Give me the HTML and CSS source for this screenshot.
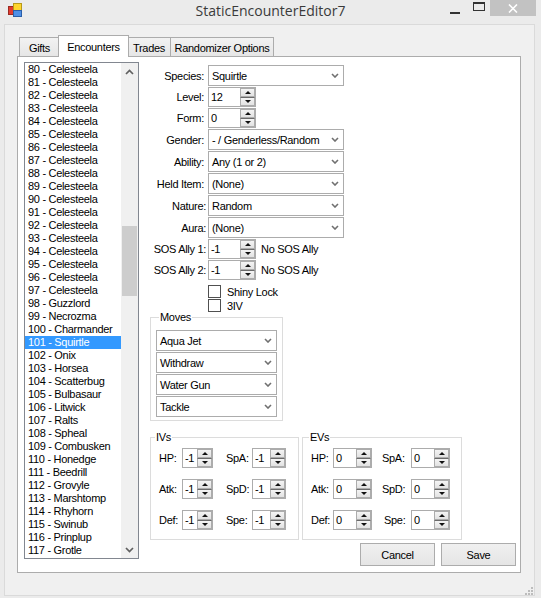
FILE: index.html
```html
<!DOCTYPE html>
<html>
<head>
<meta charset="utf-8">
<title>StaticEncounterEditor7</title>
<link rel="stylesheet" href="styles.css">
</head>
<body>
<div class="window">
  <div class="titlebar">
    <div class="tb-left">
      <svg class="appicon" width="14" height="14" viewBox="0 0 14 14">
        <rect x="0.5" y="3.5" width="5" height="8" fill="#e23b2e" stroke="#9a2a22"/>
        <rect x="5.5" y="0.5" width="8" height="7" fill="#ffd52e" stroke="#b79a1a"/>
        <rect x="5.5" y="7.5" width="8" height="6" fill="#4f8fe6" stroke="#2a5ea8"/>
      </svg>
    </div>
    <div class="title">StaticEncounterEditor7</div>
    <div class="tb-right">
      <span class="wmin"></span>
      <span class="wmax"></span>
      <span class="wclose"><svg width="10" height="9" viewBox="0 0 10 9"><path d="M1 0.5l8 8M9 0.5l-8 8" stroke="#fff" stroke-width="1.6"/></svg></span>
    </div>
  </div>
  <div class="client">
    <div class="tabs">
      <div class="tab t-gifts">Gifts</div>
      <div class="tab sel t-enc">Encounters</div>
      <div class="tab t-trades">Trades</div>
      <div class="tab t-rand">Randomizer Options</div>
    </div>
    <div class="page">
      <div class="listbox">
        <div class="items">
          <div class="item">80 - Celesteela</div>
          <div class="item">81 - Celesteela</div>
          <div class="item">82 - Celesteela</div>
          <div class="item">83 - Celesteela</div>
          <div class="item">84 - Celesteela</div>
          <div class="item">85 - Celesteela</div>
          <div class="item">86 - Celesteela</div>
          <div class="item">87 - Celesteela</div>
          <div class="item">88 - Celesteela</div>
          <div class="item">89 - Celesteela</div>
          <div class="item">90 - Celesteela</div>
          <div class="item">91 - Celesteela</div>
          <div class="item">92 - Celesteela</div>
          <div class="item">93 - Celesteela</div>
          <div class="item">94 - Celesteela</div>
          <div class="item">95 - Celesteela</div>
          <div class="item">96 - Celesteela</div>
          <div class="item">97 - Celesteela</div>
          <div class="item">98 - Guzzlord</div>
          <div class="item">99 - Necrozma</div>
          <div class="item">100 - Charmander</div>
          <div class="item selected">101 - Squirtle</div>
          <div class="item">102 - Onix</div>
          <div class="item">103 - Horsea</div>
          <div class="item">104 - Scatterbug</div>
          <div class="item">105 - Bulbasaur</div>
          <div class="item">106 - Litwick</div>
          <div class="item">107 - Ralts</div>
          <div class="item">108 - Spheal</div>
          <div class="item">109 - Combusken</div>
          <div class="item">110 - Honedge</div>
          <div class="item">111 - Beedrill</div>
          <div class="item">112 - Grovyle</div>
          <div class="item">113 - Marshtomp</div>
          <div class="item">114 - Rhyhorn</div>
          <div class="item">115 - Swinub</div>
          <div class="item">116 - Prinplup</div>
          <div class="item">117 - Grotle</div>
        </div>
        <div class="vscroll">
          <div class="sbtn"><svg width="9" height="6" viewBox="0 0 9 6"><path d="M1 5l3.5-3.5 3.5 3.5" fill="none" stroke="#606060" stroke-width="1.7"/></svg></div>
          <div class="track"><div class="thumb"></div></div>
          <div class="sbtn"><svg width="9" height="6" viewBox="0 0 9 6"><path d="M1 1l3.5 3.5 3.5-3.5" fill="none" stroke="#606060" stroke-width="1.7"/></svg></div>
        </div>
      </div>

      <div class="form">
        <div class="fields">
          <div class="lbl">Species:</div>
          <div class="combo w136"><span>Squirtle</span><svg class="chev" width="8" height="5" viewBox="0 0 8 5"><path d="M1 1l3 3 3-3" fill="none" stroke="#707070" stroke-width="1.6"/></svg></div>

          <div class="lbl">Level:</div>
          <div class="num w48"><span class="val">12</span><span class="spin"><span class="up"></span><span class="dn"></span></span></div>

          <div class="lbl">Form:</div>
          <div class="num w48"><span class="val">0</span><span class="spin"><span class="up"></span><span class="dn"></span></span></div>

          <div class="lbl">Gender:</div>
          <div class="combo w136"><span>- / Genderless/Random</span><svg class="chev" width="8" height="5" viewBox="0 0 8 5"><path d="M1 1l3 3 3-3" fill="none" stroke="#707070" stroke-width="1.6"/></svg></div>

          <div class="lbl">Ability:</div>
          <div class="combo w136"><span>Any (1 or 2)</span><svg class="chev" width="8" height="5" viewBox="0 0 8 5"><path d="M1 1l3 3 3-3" fill="none" stroke="#707070" stroke-width="1.6"/></svg></div>

          <div class="lbl">Held Item:</div>
          <div class="combo w136"><span>(None)</span><svg class="chev" width="8" height="5" viewBox="0 0 8 5"><path d="M1 1l3 3 3-3" fill="none" stroke="#707070" stroke-width="1.6"/></svg></div>

          <div class="lbl nudge">Nature:</div>
          <div class="combo w136"><span>Random</span><svg class="chev" width="8" height="5" viewBox="0 0 8 5"><path d="M1 1l3 3 3-3" fill="none" stroke="#707070" stroke-width="1.6"/></svg></div>

          <div class="lbl nudge">Aura:</div>
          <div class="combo w136"><span>(None)</span><svg class="chev" width="8" height="5" viewBox="0 0 8 5"><path d="M1 1l3 3 3-3" fill="none" stroke="#707070" stroke-width="1.6"/></svg></div>

          <div class="lbl nudge">SOS Ally 1:</div>
          <div class="sos"><div class="num w48"><span class="val">-1</span><span class="spin"><span class="up"></span><span class="dn"></span></span></div><span class="sostext">No SOS Ally</span></div>

          <div class="lbl nudge">SOS Ally 2:</div>
          <div class="sos"><div class="num w48"><span class="val">-1</span><span class="spin"><span class="up"></span><span class="dn"></span></span></div><span class="sostext">No SOS Ally</span></div>
        </div>

        <div class="checks">
          <div class="chk"><span class="box"></span><span>Shiny Lock</span></div>
          <div class="chk"><span class="box"></span><span>3IV</span></div>
        </div>

        <fieldset class="group moves">
          <legend>Moves</legend>
          <div class="movelist">
            <div class="combo w121"><span>Aqua Jet</span><svg class="chev" width="8" height="5" viewBox="0 0 8 5"><path d="M1 1l3 3 3-3" fill="none" stroke="#707070" stroke-width="1.6"/></svg></div>
            <div class="combo w121"><span>Withdraw</span><svg class="chev" width="8" height="5" viewBox="0 0 8 5"><path d="M1 1l3 3 3-3" fill="none" stroke="#707070" stroke-width="1.6"/></svg></div>
            <div class="combo w121"><span>Water Gun</span><svg class="chev" width="8" height="5" viewBox="0 0 8 5"><path d="M1 1l3 3 3-3" fill="none" stroke="#707070" stroke-width="1.6"/></svg></div>
            <div class="combo w121"><span>Tackle</span><svg class="chev" width="8" height="5" viewBox="0 0 8 5"><path d="M1 1l3 3 3-3" fill="none" stroke="#707070" stroke-width="1.6"/></svg></div>
          </div>
        </fieldset>

        <div class="statrow">
          <fieldset class="group ivs">
            <legend>IVs</legend>
            <div class="statgrid ivgrid">
              <div class="slbl">HP:</div>
              <div class="num"><span class="val">-1</span><span class="spin"><span class="up"></span><span class="dn"></span></span></div>
              <div class="slbl r">SpA:</div>
              <div class="num"><span class="val">-1</span><span class="spin"><span class="up"></span><span class="dn"></span></span></div>

              <div class="slbl">Atk:</div>
              <div class="num"><span class="val">-1</span><span class="spin"><span class="up"></span><span class="dn"></span></span></div>
              <div class="slbl r">SpD:</div>
              <div class="num"><span class="val">-1</span><span class="spin"><span class="up"></span><span class="dn"></span></span></div>

              <div class="slbl">Def:</div>
              <div class="num"><span class="val">-1</span><span class="spin"><span class="up"></span><span class="dn"></span></span></div>
              <div class="slbl r spe">Spe:</div>
              <div class="num"><span class="val">-1</span><span class="spin"><span class="up"></span><span class="dn"></span></span></div>
            </div>
          </fieldset>
          <fieldset class="group evs">
            <legend>EVs</legend>
            <div class="statgrid evgrid">
              <div class="slbl">HP:</div>
              <div class="num"><span class="val">0</span><span class="spin"><span class="up"></span><span class="dn"></span></span></div>
              <div class="slbl r">SpA:</div>
              <div class="num"><span class="val">0</span><span class="spin"><span class="up"></span><span class="dn"></span></span></div>

              <div class="slbl">Atk:</div>
              <div class="num"><span class="val">0</span><span class="spin"><span class="up"></span><span class="dn"></span></span></div>
              <div class="slbl r">SpD:</div>
              <div class="num"><span class="val">0</span><span class="spin"><span class="up"></span><span class="dn"></span></span></div>

              <div class="slbl">Def:</div>
              <div class="num"><span class="val">0</span><span class="spin"><span class="up"></span><span class="dn"></span></span></div>
              <div class="slbl r spe">Spe:</div>
              <div class="num"><span class="val">0</span><span class="spin"><span class="up"></span><span class="dn"></span></span></div>
            </div>
          </fieldset>
        </div>

        <div class="buttons">
          <div class="btn">Cancel</div>
          <div class="btn">Save</div>
        </div>
      </div>
    </div>
    <div class="gripline">
      <svg class="grip" width="9" height="9" viewBox="0 0 9 9">
        <rect x="7" y="1" width="2" height="2" fill="#bcbcbc"/>
        <rect x="4" y="4" width="2" height="2" fill="#bcbcbc"/>
        <rect x="7" y="4" width="2" height="2" fill="#bcbcbc"/>
        <rect x="1" y="7" width="2" height="2" fill="#bcbcbc"/>
        <rect x="4" y="7" width="2" height="2" fill="#bcbcbc"/>
        <rect x="7" y="7" width="2" height="2" fill="#bcbcbc"/>
      </svg>
    </div>
  </div>
</div>
</body>
</html>
```
FILE: styles.css
```css
* { box-sizing: border-box; }
html, body { margin: 0; padding: 0; }
body {
  width: 541px;
  height: 598px;
  overflow: hidden;
  background: #ebebeb;
  font-family: "Liberation Sans", Arial, sans-serif;
  font-size: 11px;
  letter-spacing: -0.3px;
  color: #000;
}
.window { width: 541px; height: 598px; background: #ebebeb; }

/* title bar */
.titlebar {
  height: 24px;
  display: grid;
  grid-template-columns: 1fr auto 1fr;
  align-items: start;
}
.tb-left { padding: 3px 0 0 8px; }
.appicon { display: block; }
.title {
  font-family: "Open Sans", "Noto Sans", sans-serif;
  font-size: 14px;
  letter-spacing: 0;
  color: #3a3a3a;
  line-height: 20px;
  padding-top: 1px;
}
.tb-right { display: flex; justify-content: flex-end; align-items: flex-start; padding-right: 5px; }
.wmin { width: 10px; height: 2px; background: #333; margin-top: 12px; }
.wmax { width: 12px; height: 9px; border: 1px solid #333; border-top-width: 2px; margin: 2px 0 0 13px; }
.wclose {
  width: 46px; height: 16px; margin-left: 5px;
  background: #c2c2c2;
  display: flex; align-items: center; justify-content: center;
}
.wclose svg { display: block; }

/* client */
.client {
  margin-left: 4px;
  width: 531px;
  height: 572px;
  background: #f0f0f0;
  border: 1px solid #dadada;
  display: flex;
  flex-direction: column;
}

/* tabs */
.tabs {
  display: flex;
  align-items: flex-end;
  height: 21px;
  margin: 10px 0 0 14px;
}
.tab {
  height: 19px;
  border: 1px solid #acacac;
  border-bottom: none;
  background: linear-gradient(#f2f2f2, #e6e6e6);
  display: flex;
  align-items: center;
  justify-content: center;
  padding-top: 2px;
  white-space: nowrap;
}
.t-gifts { width: 41px; }
.t-enc { width: 71px; margin-left: -2px; }
.t-trades { width: 44px; margin-left: -2px; }
.t-rand { width: 104px; margin-left: -1px; }
.tab.sel {
  height: 22px;
  margin-bottom: -1px;
  background: #fff;
  position: relative;
  z-index: 1;
  padding-top: 0;
}

.page {
  margin-left: 12px;
  width: 504px;
  height: 517px;
  background: #fff;
  border: 1px solid #acacac;
  display: flex;
  padding: 5px 0 0 6px;
}

/* listbox */
.listbox {
  width: 115px;
  height: 497px;
  border: 1px solid #828790;
  background: #fff;
  display: flex;
  flex: none;
}
.items { flex: 1; overflow: hidden; }
.item {
  height: 13px;
  line-height: 13px;
  padding-left: 3px;
  white-space: nowrap;
}
.item.selected { background: #3399ff; color: #fff; }
.vscroll {
  width: 17px;
  background: #f0f0f0;
  display: flex;
  flex-direction: column;
}
.sbtn { height: 17px; display: flex; align-items: center; justify-content: center; }
.sbtn svg { display: block; }
.track { flex: 1; }
.thumb { margin: 146px 1px 0 1px; height: 70px; background: #cdcdcd; }

/* form */
.form {
  width: 370px;
  margin-left: 11px;
  padding-top: 3px;
  display: flex;
  flex-direction: column;
}
.fields {
  display: grid;
  grid-template-columns: 55px auto;
  column-gap: 3px;
  row-gap: 1px;
  align-items: center;
}
.lbl { text-align: right; padding-right: 1px; white-space: nowrap; }
.lbl.nudge { margin-right: -2px; }

.combo {
  height: 21px;
  border: 1px solid #acacac;
  background: #fff;
  display: flex;
  align-items: center;
  justify-content: space-between;
  padding: 0 4px 0 3px;
  white-space: nowrap;
}
.combo .chev { display: block; flex: none; }
.w136 { width: 136px; }
.w121 { width: 121px; }

.num {
  height: 20px;
  border: 1px solid #acacac;
  background: #fff;
  display: flex;
  justify-content: space-between;
}
.num .val { padding-left: 2px; line-height: 18px; }
.w48 { width: 48px; }
.spin { width: 15px; display: flex; flex-direction: column; }
.spin .up, .spin .dn {
  flex: 1;
  border: 1px solid #acacac;
  background: linear-gradient(#f4f4f4, #e2e2e2);
  display: flex;
  align-items: center;
  justify-content: center;
}
.spin .dn { border-top: 1px solid #6a6a6a; }
.spin .up::after {
  content: "";
  border-left: 3px solid transparent;
  border-right: 3px solid transparent;
  border-bottom: 3px solid #111;
}
.spin .dn::after {
  content: "";
  border-left: 3px solid transparent;
  border-right: 3px solid transparent;
  border-top: 3px solid #111;
}
.sos { display: flex; align-items: center; }
.sostext { margin-left: 5px; }

.checks {
  margin-top: 5px;
  padding-left: 58px;
  display: flex;
  flex-direction: column;
  row-gap: 1px;
}
.chk { height: 13px; display: flex; align-items: center; }
.chk .box {
  width: 13px; height: 13px;
  border: 1px solid #505050;
  background: #fff;
  margin-right: 6px;
}

/* group boxes */
.group {
  margin: 0;
  padding: 0;
  border: 1px solid #dcdcdc;
  min-width: 0;
}
.group legend {
  padding: 0 1px;
  line-height: 13px;
  height: 13px;
}
.moves { width: 133px; margin-top: -1px; padding: 6px 4px 3px 5px; }
.moves legend { margin-left: 3px; }
.movelist { display: flex; flex-direction: column; row-gap: 1px; }

.statrow { display: flex; column-gap: 3px; margin-top: 10px; }
.ivs { width: 149px; }
.ivs legend { margin-left: 4px; }
.evs { width: 160px; }
.evs legend { margin-left: 6px; }
.statgrid {
  display: grid;
  row-gap: 11px;
  margin: 4px 0 9px 8px;
  align-items: center;
}
.ivgrid { grid-template-columns: 23px 31px 39px 34px; }
.evgrid { grid-template-columns: 22px 39px 39px 39px; }
.slbl { white-space: nowrap; }
.ivgrid .slbl.r { padding-left: 13px; }
.evgrid .slbl.r { padding-left: 10px; }
.slbl.spe { padding-left: 15px; }
.evgrid .slbl.spe { padding-left: 12px; }

.buttons {
  display: flex;
  justify-content: flex-end;
  column-gap: 6px;
  padding-right: 4px;
  margin-top: 3px;
}
.btn {
  width: 75px;
  height: 23px;
  border: 1px solid #acacac;
  background: linear-gradient(#f0f0f0, #e5e5e5);
  display: flex;
  align-items: center;
  justify-content: center;
}

.gripline { display: flex; justify-content: flex-end; padding: 13px 1px 0 0; }
.grip { display: block; }
```
